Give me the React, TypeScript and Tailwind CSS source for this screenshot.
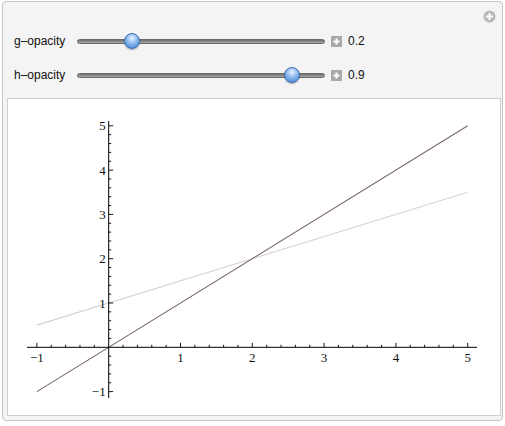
import React from "react";

const OX = 108.7;
const OY = 346.3;
const UX = 71.8;
const UY = 44.3;

const px = (x: number) => OX + x * UX;
const py = (y: number) => OY - y * UY;

const Slider = ({ label, value }: { label: string; value: number }) => {
  const thumb = 86 + value * 229 - 77;
  return (
    <div className="flex items-center h-[22px]">
      <div className="w-[70px] pl-[7px] text-[12px] text-[#111] whitespace-nowrap">{label}</div>
      <div className="relative w-[248px] h-[16px] flex items-center">
        <div className="w-full h-[5px] rounded-full bg-gradient-to-b from-[#6c6c6c] to-[#a9a9a9] border border-[#6a6a6a]" />
        <div
          className="absolute top-[0px] w-[16px] h-[16px] rounded-full border border-[#3f6fae] bg-[radial-gradient(circle_at_50%_30%,#eaf3ff_0%,#8ab8ee_45%,#3a7bd0_100%)] shadow-[0_1px_1px_rgba(0,0,0,0.3)]"
          style={{ left: thumb - 8 }}
        />
      </div>
      <div className="ml-[6px] w-[11px] h-[11px] bg-[#a9a9a9] flex items-center justify-center">
        <svg width="9" height="9" viewBox="0 0 9 9">
          <path d="M4.5 1.5v6M1.5 4.5h6" stroke="#fff" strokeWidth="2" />
        </svg>
      </div>
      <div className="ml-[6px] text-[12px] text-[#111]">{value.toFixed(1)}</div>
    </div>
  );
};

const Plot = () => {
  const xTicks: number[] = [];
  for (let i = -5; i <= 25; i++) xTicks.push(i / 5);
  const yTicks: number[] = [];
  for (let i = -5; i <= 25; i++) yTicks.push(i / 5);
  const xLabels = [-1, 1, 2, 3, 4, 5];
  const yLabels = [-1, 1, 2, 3, 4, 5];
  return (
    <svg className="block" width="492" height="316" viewBox="8 98 492 316">
      <line x1={px(-1)} y1={py(0.5)} x2={px(5)} y2={py(3.5)} stroke="#d9d3d6" strokeWidth="1.1" />
      <line x1={px(-1)} y1={py(-1)} x2={px(5)} y2={py(5)} stroke="#7a6670" strokeWidth="1.1" />
      <line x1="27" y1={OY} x2="477" y2={OY} stroke="#000" strokeWidth="1" />
      <line x1={OX} y1="120" x2={OX} y2="397" stroke="#000" strokeWidth="1" />
      {xTicks.map((t) => {
        const major = Math.abs(t - Math.round(t)) < 1e-6;
        if (Math.abs(t) < 1e-6) return null;
        return (
          <line key={"x" + t} x1={px(t)} y1={OY} x2={px(t)} y2={OY - (major ? 4.5 : 2.5)} stroke="#000" strokeWidth="0.9" />
        );
      })}
      {yTicks.map((t) => {
        const major = Math.abs(t - Math.round(t)) < 1e-6;
        if (Math.abs(t) < 1e-6) return null;
        return (
          <line key={"y" + t} x1={OX} y1={py(t)} x2={OX + (major ? 4.5 : 2.5)} y2={py(t)} stroke="#000" strokeWidth="0.9" />
        );
      })}
      {xLabels.map((l) => (
        <text key={"xl" + l} x={px(l)} y={OY + 15} textAnchor="middle" fontFamily="'Liberation Serif', serif" fontSize="13" fill="#111">
          {l < 0 ? "\u2212" + Math.abs(l) : l}
        </text>
      ))}
      {yLabels.map((l) => (
        <text key={"yl" + l} x={OX - 3} y={py(l) + 4.5} textAnchor="end" fontFamily="'Liberation Serif', serif" fontSize="13" fill="#111">
          {l < 0 ? "\u2212" + Math.abs(l) : l}
        </text>
      ))}
    </svg>
  );
};

export default function App() {
  return (
    <div className="w-[505px] h-[426px] bg-white pt-[1px] pl-[2px]" style={{ fontFamily: "'Liberation Sans', Arial, sans-serif" }}>
      <div className="relative w-[501px] h-[420px] rounded-[4px] border border-[#c6c6c6] bg-[#f4f4f4] pt-[28px] pl-[4px]">
        <svg className="absolute right-[6px] top-[8px]" width="13" height="13" viewBox="0 0 13 13">
          <circle cx="6.5" cy="6.5" r="6" fill="#b8b8b8" />
          <path d="M6.5 3v7M3 6.5h7" stroke="#fff" strokeWidth="2" />
        </svg>
        <div className="flex flex-col gap-[12px]">
          <Slider label="g–opacity" value={0.2} />
          <Slider label="h–opacity" value={0.9} />
        </div>
        <div className="mt-[12px] w-[494px] h-[318px] border border-[#cfcfcf] bg-white">
          <Plot />
        </div>
      </div>
    </div>
  );
}
